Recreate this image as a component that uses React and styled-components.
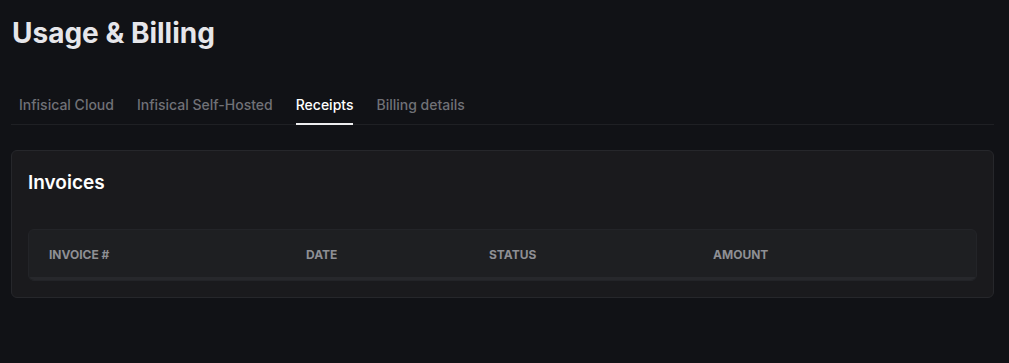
import styled, { createGlobalStyle } from 'styled-components';

const GlobalStyle = createGlobalStyle`
    html, body {
        margin: 0;
        padding: 0;
        background-color: #111216;
    }
    body {
        font-family: Inter, "Noto Sans", sans-serif;
        color: #e4e4e7;
    }
`;

const Page = styled.main`
    display: flex;
    flex-direction: column;
    width: 983px;
    min-height: 363px;
    padding: 13px 15px 0 11px;
`;

const Title = styled.h1`
    margin: 0;
    font-size: 28px;
    line-height: 40px;
    font-weight: 700;
    color: #e6e6ea;
    padding-left: 1px;
`;

const TabList = styled.nav`
    display: flex;
    flex-direction: row;
    gap: 23px;
    margin-top: 42px;
    padding-left: 8px;
    border-bottom: 1px solid #1f2024;
`;

const Tab = styled.button`
    background: none;
    border: none;
    padding: 0 0 8px;
    font-family: Inter, "Noto Sans", sans-serif;
    font-size: 14px;
    line-height: 20px;
    font-weight: 500;
    color: ${(props) => (props.$active ? '#ffffff' : '#707177')};
    border-bottom: 2px solid
        ${(props) => (props.$active ? '#ededef' : 'transparent')};
    margin-bottom: -1px;
    cursor: pointer;
`;

const Card = styled.section`
    margin-top: 25px;
    padding: 20px 16px 16px 16px;
    background-color: #1a1a1d;
    border: 1px solid #26272b;
    border-radius: 6px;
`;

const CardTitle = styled.h2`
    margin: 0;
    font-size: 19px;
    line-height: 24px;
    font-weight: 600;
    color: #ffffff;
`;

const TableWrap = styled.div`
    margin-top: 34px;
    background-color: #1e1f22;
    border: 1px solid #232428;
    border-radius: 6px;
    overflow: hidden;
`;

const Table = styled.table`
    width: 100%;
    border-collapse: collapse;
    table-layout: fixed;
`;

const HeadRow = styled.tr`
    border-bottom: 3px solid #27282c;
`;

const HeadCell = styled.th`
    width: ${(props) => (props.$width ? `${props.$width}px` : 'auto')};
    height: 46px;
    padding: 1px 0 0 20px;
    text-align: left;
    font-size: 12px;
    font-weight: 700;
    text-transform: uppercase;
    color: #8e8f94;
`;

const columns = [
    { label: 'Invoice #', width: 237 },
    { label: 'Date', width: 163 },
    { label: 'Status', width: 204 },
    { label: 'Amount' },
];

const tabs = ['Infisical Cloud', 'Infisical Self-Hosted', 'Receipts', 'Billing details'];

export default function App() {
    return (
        <>
            <GlobalStyle />
            <Page>
                <Title>Usage &amp; Billing</Title>
                <TabList>
                    {tabs.map((tab) => (
                        <Tab key={tab} $active={tab === 'Receipts'}>
                            {tab}
                        </Tab>
                    ))}
                </TabList>
                <Card>
                    <CardTitle>Invoices</CardTitle>
                    <TableWrap>
                        <Table>
                            <thead>
                                <HeadRow>
                                    {columns.map((col) => (
                                        <HeadCell key={col.label} $width={col.width}>
                                            {col.label}
                                        </HeadCell>
                                    ))}
                                </HeadRow>
                            </thead>
                        </Table>
                    </TableWrap>
                </Card>
            </Page>
        </>
    );
}
